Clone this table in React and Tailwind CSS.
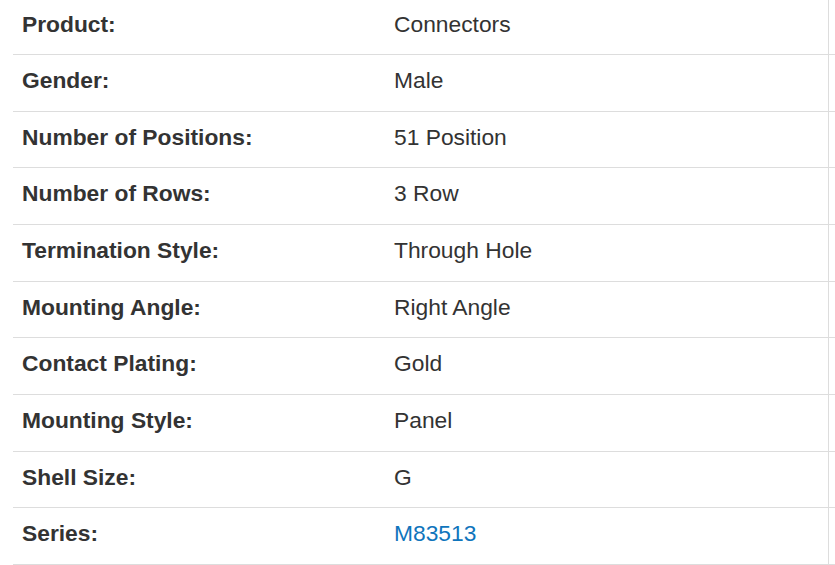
import React from "react";

const rows = [
  ["Product:", "Connectors"],
  ["Gender:", "Male"],
  ["Number of Positions:", "51 Position"],
  ["Number of Rows:", "3 Row"],
  ["Termination Style:", "Through Hole"],
  ["Mounting Angle:", "Right Angle"],
  ["Contact Plating:", "Gold"],
  ["Mounting Style:", "Panel"],
  ["Shell Size:", "G"],
  ["Series:", "M83513", true],
];

export default function App() {
  return (
    <div
      className="relative w-[835px] h-[565px] overflow-hidden bg-white text-[#333]"
      style={{ fontFamily: '"Liberation Sans", Arial, sans-serif' }}
    >
      <div className="flex flex-col pl-[13px] mt-[-1.5px]">
        {rows.map(([label, value, link], i) => (
          <div
            key={i}
            className="flex h-[56.67px] w-[830px] shrink-0 border-b border-[#dddddd] text-[22.8px] leading-[32px]"
          >
            <div className="w-[370px] shrink-0 pl-[9px] pt-[9px] font-bold">{label}</div>
            <div className="flex-1 pl-[11px] pt-[9px]">
              {link ? <span className="text-[#0f75bc]">{value}</span> : value}
            </div>
          </div>
        ))}
      </div>
      <div className="absolute left-[828px] top-0 h-full w-px bg-[#dddddd]" />
    </div>
  );
}
